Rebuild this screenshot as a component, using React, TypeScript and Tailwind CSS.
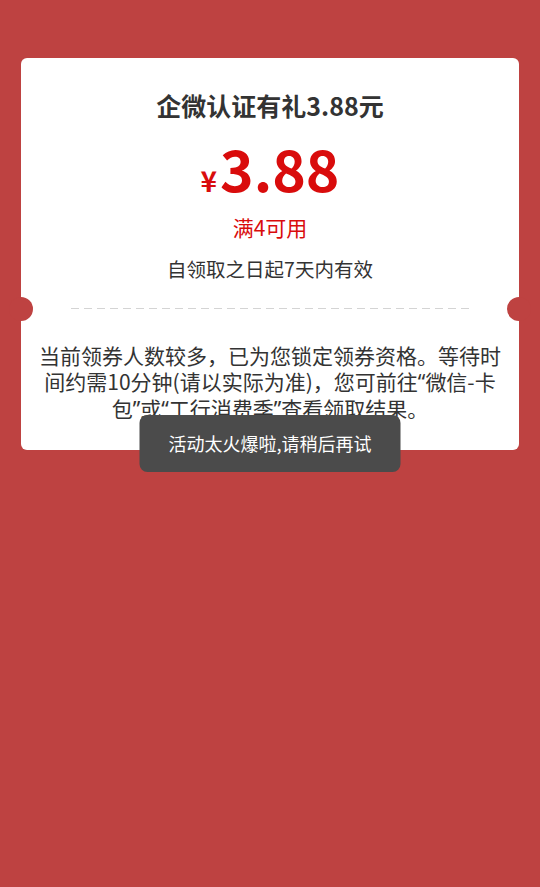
function Q({ children }: { children: string }) {
  return <span style={{ fontFamily: '"Noto Sans", sans-serif' }}>{children}</span>;
}

export default function App() {
  return (
    <div
      className="relative min-h-[887px] w-full bg-[#be4241] px-[21px] pt-[58px]"
      style={{ fontFamily: '"Noto Sans CJK SC", "Noto Sans", sans-serif' }}
    >
      {/* Coupon card */}
      <div className="relative rounded-[6px] bg-white pt-[31px] pb-[28px]">
        <h1 className="text-center text-[25px] font-bold leading-[32px] text-[#333]">
          企微认证有礼3.88元
        </h1>

        <div className="mt-[18px] flex h-[56px] items-baseline justify-center font-bold leading-none text-[#d90c0c]">
          <span className="mr-[3px] text-[28px]">¥</span>
          <span className="text-[57px]">3.88</span>
        </div>

        <p className="mt-[18px] text-center text-[21px] leading-[28px] text-[#d90c0c]">满4可用</p>
        <p className="mt-[14px] text-center text-[19.5px] leading-[28px] text-[#333]">
          自领取之日起7天内有效
        </p>

        {/* Divider with notches */}
        <div className="relative mt-[25px] flex h-px items-center">
          <div className="absolute -left-[12px] top-1/2 h-[24px] w-[24px] -translate-y-1/2 rounded-full bg-[#be4241]" />
          <div className="mx-[50px] h-px w-full bg-[repeating-linear-gradient(to_right,#d4d4d4_0_8px,transparent_8px_13px)]" />
          <div className="absolute -right-[12px] top-1/2 h-[24px] w-[24px] -translate-y-1/2 rounded-full bg-[#be4241]" />
        </div>

        <div className="mt-[33px] flex flex-col items-center text-[21px] leading-[26px] text-[#333]">
          <p className="whitespace-nowrap">当前领券人数较多，已为您锁定领券资格。等待时</p>
          <p className="whitespace-nowrap">
            间约需10分钟(请以实际为准)，您可前往<Q>“</Q>微信-卡
          </p>
          <p className="whitespace-nowrap">
            包<Q>”</Q>或<Q>“</Q>工行消费季<Q>”</Q>查看领取结果。
          </p>
        </div>
      </div>

      {/* Toast */}
      <div className="absolute left-1/2 top-[415px] flex h-[57px] w-[261px] -translate-x-1/2 items-center justify-center rounded-[8px] bg-[#4b4b4b] text-[18px] text-white">
        活动太火爆啦,请稍后再试
      </div>
    </div>
  );
}
